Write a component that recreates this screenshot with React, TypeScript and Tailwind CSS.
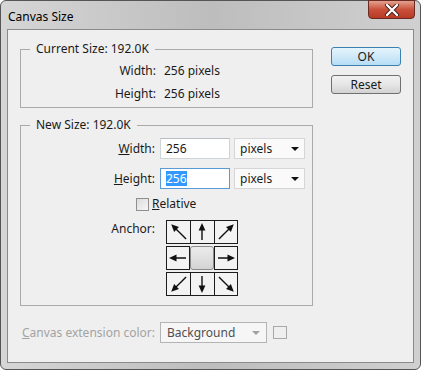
import React from 'react';

const font = { fontFamily: '"Noto Sans", "Liberation Sans", sans-serif' };

function Arrow({ rot, long }: { rot: string; long?: boolean }) {
  // long arrows are used for the diagonal cells, so they reach into the corners
  const s = long ? 24 : 20;
  const c = s / 2;
  return (
    <svg width={s} height={s} viewBox={`0 0 ${s} ${s}`} className={`shrink-0 ${rot}`}>
      <line x1={c} y1={s - 2} x2={c} y2={6} stroke="#111" strokeWidth="1.4" />
      <polygon points={`${c},1 ${c - 3.4},8.5 ${c + 3.4},8.5`} fill="#111" />
    </svg>
  );
}

function Cell({ rot, first, long }: { rot: string; first?: boolean; long?: boolean }) {
  return (
    <div
      className={`w-[24px] h-[22px] flex items-center justify-center overflow-hidden bg-[#f3f3f3] ${
        first ? '' : 'border-l border-[#1c1c1c]'
      }`}
    >
      <Arrow rot={rot} long={long} />
    </div>
  );
}

function Field({ value, selected }: { value: string; selected?: boolean }) {
  return (
    <div
      className={`w-[70px] h-[21px] bg-white border flex items-center pl-[5px] text-[12px] ${
        selected ? 'border-[#5b9bd5]' : 'border-[#cfd4d9] border-t-[#b9bec4]'
      }`}
    >
      {selected ? <span className="bg-[#3399ff] text-white leading-[15px]">{value}</span> : value}
    </div>
  );
}

function Units() {
  return (
    <div className="w-[71px] h-[21px] bg-[#fafafa] border border-[#d6d6d6] flex items-center justify-between pl-[5px] pr-[5px] text-[12px]">
      <span>pixels</span>
      <svg width="8" height="4" viewBox="0 0 8 4">
        <polygon points="0,0 8,0 4,4" fill="#111" />
      </svg>
    </div>
  );
}

function Btn({ label, focused }: { label: string; focused?: boolean }) {
  return (
    <div
      className={`w-[70px] h-[19px] rounded-[3px] border flex items-center justify-center text-[12px] ${
        focused
          ? 'border-[#3c7fb1] bg-gradient-to-b from-[#e5f4fc] via-[#cfe9f8] to-[#b6ddf5]'
          : 'border-[#707070] bg-gradient-to-b from-[#f2f2f2] via-[#e6e6e6] to-[#d2d2d2]'
      }`}
    >
      {label}
    </div>
  );
}

export default function App() {
  return (
    <div
      className="w-[421px] h-[370px] rounded-[6px] border border-[#555] bg-gradient-to-r from-[#d6d6d6] via-[#bdbdbd] to-[#d0d0d0] flex flex-col text-[#1a1a1a]"
      style={font}
    >
      {/* title bar */}
      <div className="h-[28px] flex items-start justify-between pl-[7px] pr-[5px]">
        <div className="text-[12px] mt-[7px] text-black">Canvas Size</div>
        <div className="w-[47px] h-[19px] -mt-px rounded-b-[4px] border border-[#6b2a22] bg-gradient-to-b from-[#e3a08f] via-[#c9503a] to-[#b83a26] flex items-center justify-center">
          <svg width="16" height="12" viewBox="0 0 16 12">
            <path d="M3 1 L13 11 M13 1 L3 11" stroke="#3b1712" strokeWidth="4" strokeLinecap="round" />
            <path d="M3 1 L13 11 M13 1 L3 11" stroke="#fff" strokeWidth="2.4" strokeLinecap="round" />
          </svg>
        </div>
      </div>

      {/* client area */}
      <div className="mx-[6px] h-[334px] border border-[#8a8a8a] bg-[#efefef] flex pt-[11px] pl-[12px] text-[12px]">
        <div className="w-[293px] flex flex-col">
          <fieldset className="border border-[#aaaaaa] pb-[2px]">
            <legend className="ml-[9px] px-[6px] leading-[16px]">Current Size: 192.0K</legend>
            <div className="pt-[2px]">
              <div className="h-[23px] flex items-center">
                <div className="w-[135px] text-right">Width:</div>
                <div className="ml-[8px]">256 pixels</div>
              </div>
              <div className="h-[23px] flex items-center">
                <div className="w-[135px] text-right">Height:</div>
                <div className="ml-[8px]">256 pixels</div>
              </div>
            </div>
          </fieldset>

          <fieldset className="mt-[9px] border border-[#aaaaaa] pb-[9px]">
            <legend className="ml-[9px] px-[6px] leading-[16px]">New Size: 192.0K</legend>
            <div className="mt-[4px] h-[23px] flex items-center">
              <div className="w-[134px] text-right">
                <span className="underline">W</span>idth:
              </div>
              <div className="ml-[5px]">
                <Field value="256" />
              </div>
              <div className="ml-[4px]">
                <Units />
              </div>
            </div>
            <div className="mt-[7px] h-[23px] flex items-center">
              <div className="w-[134px] text-right">
                <span className="underline">H</span>eight:
              </div>
              <div className="ml-[5px]">
                <Field value="256" selected />
              </div>
              <div className="ml-[4px]">
                <Units />
              </div>
            </div>
            <div className="mt-[5px] h-[18px] flex items-center">
              <div className="ml-[115px] w-[13px] h-[13px] border border-[#8f8f8f] bg-gradient-to-br from-[#dcdcdc] to-[#f6f6f6]" />
              <div className="ml-[3px]">
                <span className="underline">R</span>elative
              </div>
            </div>
            <div className="mt-[7px] flex items-start">
              <div className="w-[134px] text-right leading-[16px] mt-[1px]">Anchor:</div>
              <div className="ml-[11px] flex flex-col gap-[2px]">
                <div className="flex border border-[#1c1c1c] w-[72px]">
                  <Cell rot="-rotate-45" first long />
                  <Cell rot="rotate-0" />
                  <Cell rot="rotate-45" long />
                </div>
                <div className="flex w-[72px] h-[24px]">
                  <div className="w-[24px] h-[24px] border border-[#1c1c1c] flex items-center justify-center overflow-hidden bg-[#f3f3f3]">
                    <Arrow rot="-rotate-90" />
                  </div>
                  <div className="w-[24px] h-[24px] rounded-[3px] border border-[#8a8a8a] bg-gradient-to-b from-[#ececec] via-[#e0e0e0] to-[#d4d4d4]" />
                  <div className="w-[24px] h-[24px] border border-[#1c1c1c] flex items-center justify-center overflow-hidden bg-[#f3f3f3]">
                    <Arrow rot="rotate-90" />
                  </div>
                </div>
                <div className="flex border border-[#1c1c1c] w-[72px]">
                  <Cell rot="rotate-[-135deg]" first long />
                  <Cell rot="rotate-180" />
                  <Cell rot="rotate-[135deg]" long />
                </div>
              </div>
            </div>
          </fieldset>

          <div className="mt-[16px] h-[21px] flex items-center">
            <div className="w-[135px] text-right text-[#a3a3a3]">
              <span className="underline">C</span>anvas extension color:
            </div>
            <div className="ml-[5px] w-[107px] h-[21px] border border-[#b4b4b4] bg-[#f6f6f6] flex items-center justify-between pl-[6px] pr-[6px] text-[#505050]">
              <span>Background</span>
              <svg width="8" height="4" viewBox="0 0 8 4">
                <polygon points="0,0 8,0 4,4" fill="#a0a0a0" />
              </svg>
            </div>
            <div className="ml-[6px] w-[14px] h-[13px] border border-[#a8a8a8]" />
          </div>
        </div>

        <div className="ml-[18px] mt-[6px] flex flex-col gap-[9px]">
          <Btn label="OK" focused />
          <Btn label="Reset" />
        </div>
      </div>
    </div>
  );
}
